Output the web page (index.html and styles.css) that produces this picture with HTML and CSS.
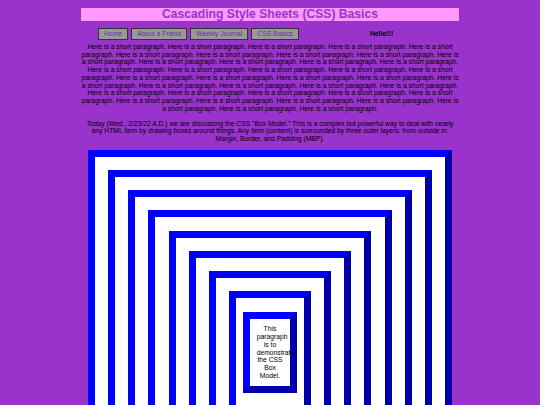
FILE: index.html
```html
<!DOCTYPE html>
<html lang="en">
<head>
<meta charset="utf-8">
<title>Cascading Style Sheets (CSS) Basics</title>
<link rel="stylesheet" href="styles.css">
</head>
<body>
<h1 class="title">Cascading Style Sheets (CSS) Basics</h1>
<nav class="nav">
  <a class="btn" href="#">Home</a>
  <a class="btn" href="#">About a Friend</a>
  <a class="btn" href="#">Weekly Journal</a>
  <a class="btn" href="#">CSS Basics</a>
  <span class="hello">Hello!!!</span>
</nav>
<p class="text intro">Here is a short paragraph. Here is a short paragraph. Here is a short paragraph. Here is a short paragraph. Here is a short paragraph. Here is a short paragraph. Here is a short paragraph. Here is a short paragraph. Here is a short paragraph. Here is a short paragraph. Here is a short paragraph. Here is a short paragraph. Here is a short paragraph. Here is a short paragraph. Here is a short paragraph. Here is a short paragraph. Here is a short paragraph. Here is a short paragraph. Here is a short paragraph. Here is a short paragraph. Here is a short paragraph. Here is a short paragraph. Here is a short paragraph. Here is a short paragraph. Here is a short paragraph. Here is a short paragraph. Here is a short paragraph. Here is a short paragraph. Here is a short paragraph. Here is a short paragraph. Here is a short paragraph. Here is a short paragraph. Here is a short paragraph. Here is a short paragraph. Here is a short paragraph. Here is a short paragraph. Here is a short paragraph. Here is a short paragraph. Here is a short paragraph. Here is a short paragraph.</p>
<p class="text">Today (Wed., 2/23/22 A.D.) we are discussing the CSS "Box Model." This is a complex but powerful way to deal with nearly any HTML item by drawing boxes around things. Any item (content) is surrounded by three outer layers: from outside in: Margin, Border, and Padding (MBP).</p>
<div class="box"><div class="box"><div class="box"><div class="box"><div class="box"><div class="box"><div class="box"><div class="box">
<p class="inner">This paragraph is to demonstrate the CSS Box Model.</p>
</div></div></div></div></div></div></div></div>
</body>
</html>
```

FILE: styles.css
```css
html {
  background: #9933cc;
}

body {
  margin: 0 auto;
  width: 378px;
  font-family: "Liberation Sans", Arial, sans-serif;
  font-size: 6.75px;
  line-height: 7.78px;
  color: #000;
}

.title {
  margin: 8px 0 0;
  height: 13px;
  line-height: 13px;
  font-size: 12.15px;
  font-weight: bold;
  text-align: center;
  background: #ff99ff;
  color: #9933cc;
}

.nav {
  display: flex;
  align-items: center;
  gap: 3px;
  margin-top: 7px;
  padding-left: 17px;
  height: 12px;
}

.btn {
  display: block;
  box-sizing: border-box;
  height: 12px;
  padding: 0 5px;
  border: 1px solid #333;
  background: #999;
  color: #663399;
  text-decoration: none;
  line-height: 10px;
}

.hello {
  margin-left: 68px;
  font-weight: bold;
}

.text {
  margin: 6.75px 0;
  text-align: center;
}

.intro {
  margin-top: 2.8px;
}

.box {
  margin: 6.625px;
  padding: 6.625px;
  border: 7px solid;
  border-color: #0000ff #0000aa #0000aa #0000ff;
  background: #fff;
}

.inner {
  margin: 6.625px 0;
  padding: 6.625px;
  border: 7px solid;
  border-color: #0000ff #0000aa #0000aa #0000ff;
  text-align: center;
}
```
